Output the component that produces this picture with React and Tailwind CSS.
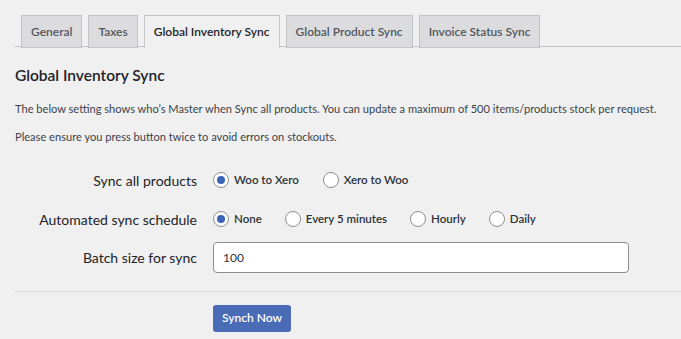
import { useState } from 'react';

const tabs = ['General', 'Taxes', 'Global Inventory Sync', 'Global Product Sync', 'Invoice Status Sync'];

function Radio({ checked, label, onClick }) {
  return (
    <label className="flex items-center gap-[5px] cursor-pointer" onClick={onClick}>
      <span className="w-[16px] h-[16px] rounded-full border border-[#8c8f94] bg-white flex items-center justify-center">
        {checked && <span className="w-[8px] h-[8px] rounded-full bg-[#3a63b8]" />}
      </span>
      <span className="text-[11.5px] font-semibold text-[#2c3338]">{label}</span>
    </label>
  );
}

export default function App() {
  const [tab, setTab] = useState(2);
  const [direction, setDirection] = useState('woo');
  const [schedule, setSchedule] = useState('none');
  const [batch, setBatch] = useState('100');

  return (
    <div className="h-[339px] overflow-hidden bg-[#f0f0f1] pl-[15px] pt-[15px] font-['Lato',sans-serif] text-[#1d2327]">
      {/* Tabs */}
      <div className="flex gap-[6px] pl-[6px] border-b border-[#c3c4c7] h-[32px]">
        {tabs.map((t, i) => (
          <button key={t} onClick={() => setTab(i)}
            className={`h-[33px] px-[9px] text-[12px] font-semibold border border-[#c3c4c7] ${tab === i ? 'bg-[#f0f0f1] border-b-[#f0f0f1] text-[#1d2327]' : 'bg-[#dcdcde] text-[#50575e]'}`}>
            {t}
          </button>
        ))}
      </div>

      <h2 className="text-[15.5px] font-semibold mt-[17px] leading-[22px]">Global Inventory Sync</h2>
      <p className="text-[11.1px] text-[#3c434a] mt-[15px] leading-[16px] whitespace-nowrap">The below setting shows who’s Master when Sync all products. You can update a maximum of 500 items/products stock per request.</p>
      <p className="text-[11.1px] text-[#3c434a] mt-[12px] leading-[16px]">Please ensure you press button twice to avoid errors on stockouts.</p>

      {/* Settings */}
      <div className="mt-[25px] flex items-center h-[20px]">
        <div className="w-[182px] text-right text-[14px]">Sync all products</div>
        <div className="ml-[16px] flex gap-[24px]">
          <Radio checked={direction === 'woo'} label="Woo to Xero" onClick={() => setDirection('woo')} />
          <Radio checked={direction === 'xero'} label="Xero to Woo" onClick={() => setDirection('xero')} />
        </div>
      </div>
      <div className="mt-[19px] flex items-center h-[20px]">
        <div className="w-[182px] text-right text-[14px]">Automated sync schedule</div>
        <div className="ml-[16px] flex gap-[23px]">
          {[['none', 'None'], ['5', 'Every 5 minutes'], ['hourly', 'Hourly'], ['daily', 'Daily']].map(([k, l]) => (
            <Radio key={k} checked={schedule === k} label={l} onClick={() => setSchedule(k)} />
          ))}
        </div>
      </div>
      <div className="mt-[13px] flex items-center">
        <div className="w-[182px] text-right text-[14px]">Batch size for sync</div>
        <input value={batch} onChange={e => setBatch(e.target.value)}
          className="ml-[16px] w-[416px] h-[31px] bg-white border border-[#8c8f94] rounded-[4px] px-[9px] text-[12px] text-[#2c3338] outline-none" />
      </div>

      <div className="mt-[18px] border-t border-[#dcdcde]" />

      <div className="pl-[198px] mt-[12px]">
        <button className="h-[27px] px-[9px] rounded-[3px] bg-[#4a6bb5] text-white text-[12px] font-semibold">Synch Now</button>
      </div>
    </div>
  );
}
